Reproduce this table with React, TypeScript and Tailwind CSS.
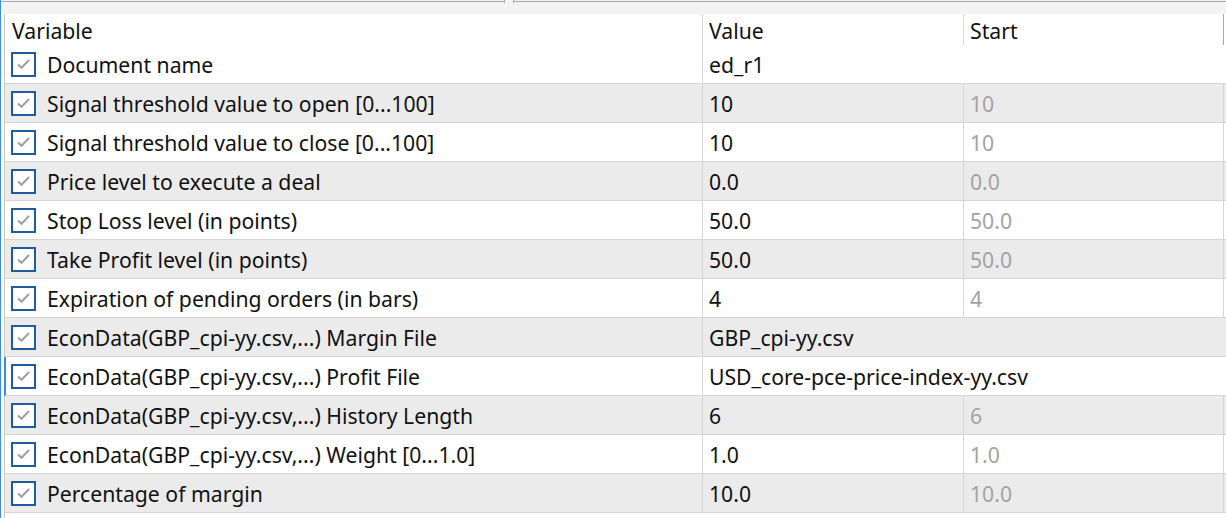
const rows: { name: string; value: string; start?: string; selected?: boolean }[] = [
  { name: "Document name", value: "ed_r1" },
  { name: "Signal threshold value to open [0...100]", value: "10", start: "10" },
  { name: "Signal threshold value to close [0...100]", value: "10", start: "10" },
  { name: "Price level to execute a deal", value: "0.0", start: "0.0" },
  { name: "Stop Loss level (in points)", value: "50.0", start: "50.0" },
  { name: "Take Profit level (in points)", value: "50.0", start: "50.0" },
  { name: "Expiration of pending orders (in bars)", value: "4", start: "4" },
  { name: "EconData(GBP_cpi-yy.csv,...) Margin File", value: "GBP_cpi-yy.csv" },
  { name: "EconData(GBP_cpi-yy.csv,...) Profit File", value: "USD_core-pce-price-index-yy.csv", selected: true },
  { name: "EconData(GBP_cpi-yy.csv,...) History Length", value: "6", start: "6" },
  { name: "EconData(GBP_cpi-yy.csv,...) Weight [0...1.0]", value: "1.0", start: "1.0" },
  { name: "Percentage of margin", value: "10.0", start: "10.0" },
];

function Check() {
  return (
    <div className="w-[25px] h-[25px] shrink-0 border-2 border-[#1f5c99] bg-white flex items-center justify-center">
      <svg width="15" height="12" viewBox="0 0 15 12" fill="none">
        <path d="M2 6.5 L5.5 9.8 L13 2" stroke="#a0a0a0" strokeWidth="2" />
      </svg>
    </div>
  );
}

export default function App() {
  return (
    <div
      className="w-[1226px] h-[518px] bg-white border-l border-[#3d8ee0] flex flex-col overflow-hidden text-[21.2px] text-[#111]"
      style={{ fontFamily: '"Noto Sans", "Open Sans", sans-serif' }}
    >
      {/* Tab strip */}
      <div className="h-[14px] shrink-0 bg-[#f3f3f3] flex">
        <div className="w-[503px] h-[2px] border-b border-[#a8a8a8]" />
        <div className="w-[1px] h-[3px] bg-[#a8a8a8]" />
        <div className="w-[8px]" />
        <div className="w-[1px] h-[3px] bg-[#a8a8a8]" />
        <div className="flex-1 h-[2px] border-b border-[#a8a8a8]" />
      </div>

      <div className="flex-1 flex pl-[3px]">
        <div className="flex-1 border-l border-[#c8c8c8] flex flex-col">
          {/* Header */}
          <div className="h-[31px] flex items-center">
            <div className="w-[697px] pl-[7px] pt-[2px]">Variable</div>
            <div className="w-[261px] h-full flex items-center pl-[6px] pt-[2px] border-l border-[#d6d6d6]">Value</div>
            <div className="w-[261px] h-full flex items-center pl-[6px] pt-[2px] border-l border-[#d6d6d6] border-r border-r-[#a8a8a8]">
              Start
            </div>
          </div>

          {rows.map((r, i) => (
            <div
              key={i}
              className={`h-[39px] flex border-b border-[#d4d4d4] ${i % 2 === 1 ? "bg-[#ebebeb]" : "bg-white"} ${
                r.selected ? "border-l-2 border-l-[#3d8ee0] -ml-[1px]" : ""
              }`}
            >
              <div className={`${r.selected ? "w-[696px] pl-[5px]" : "w-[697px] pl-[6px]"} flex items-center gap-[11px]`}>
                <Check />
                <span className="whitespace-nowrap pt-[2px]">{r.name}</span>
              </div>
              {r.start === undefined ? (
                <div className="w-[522px] flex items-center pl-[6px] pt-[2px] border-l border-[#d6d6d6] whitespace-nowrap">
                  {r.value}
                </div>
              ) : (
                <>
                  <div className="w-[261px] flex items-center pl-[6px] pt-[2px] border-l border-[#d6d6d6]">{r.value}</div>
                  <div className="w-[261px] flex items-center pl-[6px] pt-[2px] border-l border-[#d6d6d6] border-r text-[#a3a3a3]">
                    {r.start}
                  </div>
                </>
              )}
            </div>
          ))}
        </div>
      </div>
    </div>
  );
}
